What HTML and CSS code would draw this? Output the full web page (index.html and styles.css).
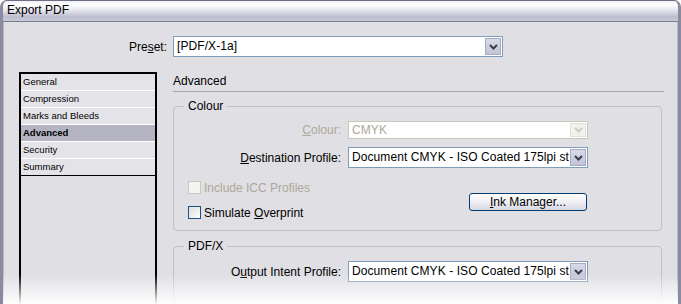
FILE: index.html
```html
<!DOCTYPE html>
<html>
<head>
<meta charset="utf-8">
<title>Export PDF</title>
<link rel="stylesheet" href="styles.css">
</head>
<body>

<div class="window">
  <div class="titlebar">Export PDF</div>
  <div class="client">

    <div class="preset-row">
      <label class="preset-label">Pre<u>s</u>et:</label>
      <div class="select preset-select">
        <span class="select-value">[PDF/X-1a]</span>
        <span class="select-btn"><svg width="9" height="6" viewBox="0 0 9 6"><path d="M1 1 L4.5 4.5 L8 1" fill="none" stroke="#3c3c48" stroke-width="2"/></svg></span>
      </div>
    </div>

    <div class="main">
      <!-- left hand list of the dialog pages -->
      <ul class="nav">
        <li>General</li>
        <li>Compression</li>
        <li>Marks and Bleeds</li>
        <li class="active">Advanced</li>
        <li>Security</li>
        <li class="last">Summary</li>
      </ul>

      <div class="panel">
        <div class="panel-title">Advanced</div>

        <fieldset class="group">
          <legend>Colour</legend>
          <div class="group-body">
            <div class="field-row">
              <label class="field-label disabled"><u>C</u>olour:</label>
              <div class="select short disabled">
                <span class="select-value">CMYK</span>
                <span class="select-btn"><svg width="9" height="6" viewBox="0 0 9 6"><path d="M1 1 L4.5 4.5 L8 1" fill="none" stroke="#cfcdc2" stroke-width="2"/></svg></span>
              </div>
            </div>
            <div class="field-row">
              <label class="field-label"><u>D</u>estination Profile:</label>
              <div class="select">
                <span class="select-value">Document CMYK - ISO Coated 175lpi st</span>
                <span class="select-btn"><svg width="9" height="6" viewBox="0 0 9 6"><path d="M1 1 L4.5 4.5 L8 1" fill="none" stroke="#3c3c48" stroke-width="2"/></svg></span>
              </div>
            </div>

            <div class="options">
              <div class="checks">
                <div class="check disabled"><span class="box"></span><span>Include ICC Profiles</span></div>
                <div class="check"><span class="box"></span><span>Simulate <u>O</u>verprint</span></div>
              </div>
              <button type="button" class="btn"><u>I</u>nk Manager...</button>
            </div>
          </div>
        </fieldset>

        <fieldset class="group second">
          <legend>PDF/X</legend>
          <div class="group-body">
            <div class="field-row">
              <label class="field-label">O<u>u</u>tput Intent Profile:</label>
              <div class="select">
                <span class="select-value">Document CMYK - ISO Coated 175lpi st</span>
                <span class="select-btn"><svg width="9" height="6" viewBox="0 0 9 6"><path d="M1 1 L4.5 4.5 L8 1" fill="none" stroke="#3c3c48" stroke-width="2"/></svg></span>
              </div>
            </div>
          </div>
        </fieldset>
      </div>
    </div>

  </div>
  <!-- fade to white at the bottom of the shot -->
  <div class="fade"></div>
</div>

</body>
</html>
```

FILE: styles.css
```css
* {
  box-sizing: border-box;
}

body {
  margin: 0;
  background-color: #ffffff;
  font-family: "Liberation Sans", Arial, sans-serif;
  font-size: 12px;
  color: #000000;
}

.window {
  position: relative;
  width: 681px;
  height: 304px;
  overflow: hidden;
  background-color: #e0dfe4;
  border-top: 1px solid #6e6e84;
  border-left: 3px solid #8a8aa0;
  border-right: 3px solid #8a8aa0;
  border-radius: 7px 7px 0 0;
  box-shadow: inset 1px 0 #b8b8c8, inset -1px 0 #b8b8c8;
}

.titlebar {
  height: 21px;
  padding-left: 4px;
  line-height: 19px;
  font-size: 12px;
  color: #000000;
  background: linear-gradient(#f0f0f6, #ffffff 20%, #e6e6ee 45%, #bcbcce 80%, #cacad8);
  border-bottom: 1px solid #7a7a90;
}

.client {
  display: flex;
  flex-direction: column;
}

/* Preset row */
.preset-row {
  display: flex;
  align-items: center;
  margin-top: 14px;
  gap: 6px;
}

.preset-label {
  width: 164px;
  text-align: right;
}

.select {
  display: flex;
  height: 21px;
  width: 240px;
  background-color: #ffffff;
  border: 1px solid #7f9db9;
}

.preset-select {
  width: 330px;
}

.select-value {
  flex: 1;
  padding-left: 3px;
  line-height: 19px;
  white-space: nowrap;
  overflow: hidden;
  letter-spacing: 0.08px;
}

.select-btn {
  display: flex;
  align-items: center;
  justify-content: center;
  width: 16px;
  margin: 1px;
  background: linear-gradient(#d8dae8, #c2c4d6);
  border: 1px solid #a6aac2;
}

.select.short {
  height: 18px;
}

.select.short .select-value {
  line-height: 16px;
}

.select.disabled {
  border-color: #c9c7ba;
  color: #aca899;
}

.select.disabled .select-btn {
  background: #f2f1ee;
  border-color: #e2e0d8;
}

/* Main area */
.main {
  display: flex;
  margin-top: 15px;
  gap: 16px;
}

.nav {
  list-style: none;
  margin: 0 0 0 16px;
  padding: 0;
  width: 138px;
  height: 260px;
  border: 2px solid #000000;
  font-size: 9.5px;
}

.nav li {
  height: 17px;
  line-height: 16px;
  padding-left: 2px;
  background-color: #e4e4e8;
  border-bottom: 1px solid #ffffff;
}

.nav li.active {
  background-color: #b4b4c2;
  font-weight: bold;
}

.nav li.last {
  border-bottom-color: #000000;
}

.panel {
  width: 491px;
}

.panel-title {
  height: 20px;
  line-height: 19px;
  border-bottom: 1px solid #a4a4ac;
}

.group {
  margin: 7px 2px 0 0;
  padding: 0;
  border: 1px solid #c0c0c4;
  border-radius: 4px;
}

.group legend {
  margin-left: 10px;
  padding: 0 4px;
  line-height: 14px;
}

.group.second {
  margin-top: 8px;
}

.group-body {
  padding: 8px 0 11px 0;
}

.group.second .group-body {
  padding-bottom: 20px;
}

.field-row {
  display: grid;
  grid-template-columns: 167px 240px;
  column-gap: 7px;
  align-items: center;
  margin-bottom: 8px;
}

.field-row:last-child {
  margin-bottom: 0;
}

.field-label {
  text-align: right;
}

.field-label.disabled {
  color: #aca899;
}

/* checkboxes and the Ink Manager button */
.options {
  display: flex;
  justify-content: space-between;
  margin-top: 13px;
  padding: 0 74px 0 14px;
}

.checks {
  display: flex;
  flex-direction: column;
  gap: 12px;
}

.check {
  display: flex;
  align-items: center;
  height: 13px;
  gap: 3px;
}

.check .box {
  width: 13px;
  height: 13px;
  border: 1px solid #1c5180;
  background: linear-gradient(135deg, #dcdcd7, #ffffff);
}

.check.disabled {
  color: #aca899;
}

.check.disabled .box {
  border-color: #cac8bb;
  background: #f4f4f2;
}

.btn {
  align-self: flex-end;
  margin-bottom: 8px;
  width: 118px;
  height: 18px;
  padding: 0;
  font-family: "Liberation Sans", Arial, sans-serif;
  font-size: 12px;
  color: #000000;
  border: 1px solid #003c74;
  border-radius: 3px;
  background: linear-gradient(#ffffff, #f0f0f4 50%, #d6d6e2);
}

.fade {
  position: absolute;
  left: -3px;
  right: -3px;
  bottom: 0;
  height: 30px;
  background: linear-gradient(rgba(255, 255, 255, 0), rgba(255, 255, 255, 0.96));
}
```
